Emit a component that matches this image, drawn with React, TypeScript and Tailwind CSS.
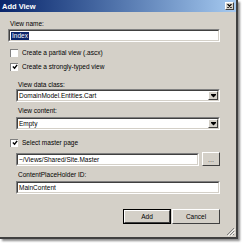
import React from 'react';

const font = { fontFamily: '"Liberation Sans", Arial, sans-serif' };

function Sunken({ className = '', children }: { className?: string; children?: React.ReactNode }) {
  return (
    <div className={`border-t border-l border-t-[#808080] border-l-[#808080] border-b border-r border-b-white border-r-white ${className}`}>
      <div className="h-full border-t border-l border-t-[#404040] border-l-[#404040] border-b border-r border-b-[#d4d0c8] border-r-[#d4d0c8] bg-white flex items-center">
        {children}
      </div>
    </div>
  );
}

function Check({ checked, label }: { checked?: boolean; label: string }) {
  return (
    <div className="flex items-center h-[9px] ml-[2px]">
      <div className="w-[8px] h-[8px] border-t border-l border-[#808080] border-b-white border-r-white bg-white flex items-center justify-center">
        {checked && (
          <svg width="6" height="6" viewBox="0 0 7 7">
            <path d="M1 3 L3 5 L6 1" stroke="#000" strokeWidth="1.6" fill="none" />
          </svg>
        )}
      </div>
      <span className="ml-[4px] text-[6.5px] leading-[9px] text-black">{label}</span>
    </div>
  );
}

function Combo({ value }: { value: string }) {
  return (
    <Sunken className="h-[13px] ml-[8px]">
      <span className="flex-1 pl-[1px] text-[6.5px] leading-[9px] text-black">{value}</span>
      <div className="w-[10px] h-full bg-[#d4d0c8] border-t border-l border-t-white border-l-white border-b border-r border-b-[#404040] border-r-[#404040] flex items-center justify-center">
        <svg width="5" height="4" viewBox="0 0 5 4">
          <rect x="0" y="0" width="5" height="1" fill="#000" />
          <path d="M0 1 H5 L2.5 3.5 Z" fill="#000" />
        </svg>
      </div>
    </Sunken>
  );
}

function Btn({ label, isDefault }: { label: string; isDefault?: boolean }) {
  return (
    <div className={`w-[48px] h-[15px] ${isDefault ? 'border border-black' : ''}`}>
      <div className="h-full border-t border-l border-t-white border-l-white border-b border-r border-b-[#404040] border-r-[#404040] bg-[#d4d0c8] flex items-center justify-center text-[6.5px] text-black">
        {label}
      </div>
    </div>
  );
}

export default function App() {
  return (
    <div className="w-[243px] h-[244px] bg-white" style={font}>
      <div className="w-[238px] h-[239px] bg-[#d4d0c8] border-r-2 border-b-2 border-r-[#404040] border-b-[#404040] shadow-[2px_2px_2px_rgba(0,0,0,0.45)] flex flex-col relative">
        <div className="h-[12px] bg-gradient-to-r from-[#0a246a] to-[#a6caf0] flex items-center justify-between pl-[2px] pr-[2px]">
          <span className="text-white font-bold text-[7.5px] leading-[9px]">Add View</span>
          <div className="w-[9px] h-[8px] bg-[#d4d0c8] border-t border-l border-t-white border-l-white border-b border-r border-b-[#404040] border-r-[#404040] flex items-center justify-center">
            <svg width="5" height="4" viewBox="0 0 5 4">
              <path d="M0.5 0 L4.5 4 M4.5 0 L0.5 4" stroke="#000" strokeWidth="1.1" />
            </svg>
          </div>
        </div>

        <div className="flex flex-col pl-[8px] pr-[16px]">
          <span className="mt-[7px] ml-[2px] text-[6.5px] leading-[9px] text-black">View name:</span>
          <Sunken className="h-[13px] mt-[1px]">
            <span className="ml-[1px] bg-[#0a246a] text-white text-[6.5px] leading-[8px] px-[1px]">Index</span>
          </Sunken>

          <div className="mt-[6px]"><Check label="Create a partial view (.ascx)" /></div>
          <div className="mt-[5px]"><Check checked label="Create a strongly-typed view" /></div>

          <span className="mt-[9px] ml-[10px] text-[6.5px] leading-[9px] text-black">View data class:</span>
          <Combo value="DomainModel.Entities.Cart" />

          <span className="mt-[4px] ml-[10px] text-[6.5px] leading-[9px] text-black">View content:</span>
          <div className="mt-[2px]"><Combo value="Empty" /></div>

          <div className="mt-[8px]"><Check checked label="Select master page" /></div>

          <div className="mt-[5px] ml-[8px] flex items-center gap-[3px]">
            <Sunken className="h-[13px] flex-1">
              <span className="pl-[1px] text-[6.5px] leading-[9px] text-black">~/Views/Shared/Site.Master</span>
            </Sunken>
            <div className="w-[18px] h-[14px] bg-[#d4d0c8] border-t border-l border-t-white border-l-white border-b border-r border-b-[#404040] border-r-[#404040] flex items-end justify-center pb-[3px] text-[7px] leading-[5px] text-[#505050]">
              ...
            </div>
          </div>

          <span className="mt-[4px] ml-[10px] text-[6.5px] leading-[9px] text-black">ContentPlaceHolder ID:</span>
          <div className="mt-[2px]">
            <Sunken className="h-[13px] ml-[8px]">
              <span className="pl-[1px] text-[6.5px] leading-[9px] text-black">MainContent</span>
            </Sunken>
          </div>

          <div className="mt-[15px] flex justify-end gap-[1px]">
            <Btn label="Add" isDefault />
            <Btn label="Cancel" />
          </div>
        </div>

        <svg className="absolute right-[1px] bottom-[1px]" width="9" height="9" viewBox="0 0 9 9">
          <path d="M8 1 L1 8 M8 4 L4 8 M8 7 L7 8" stroke="#808080" strokeWidth="1" />
          <path d="M9 2 L2 9 M9 5 L5 9" stroke="#ffffff" strokeWidth="0.8" />
        </svg>
      </div>
    </div>
  );
}
